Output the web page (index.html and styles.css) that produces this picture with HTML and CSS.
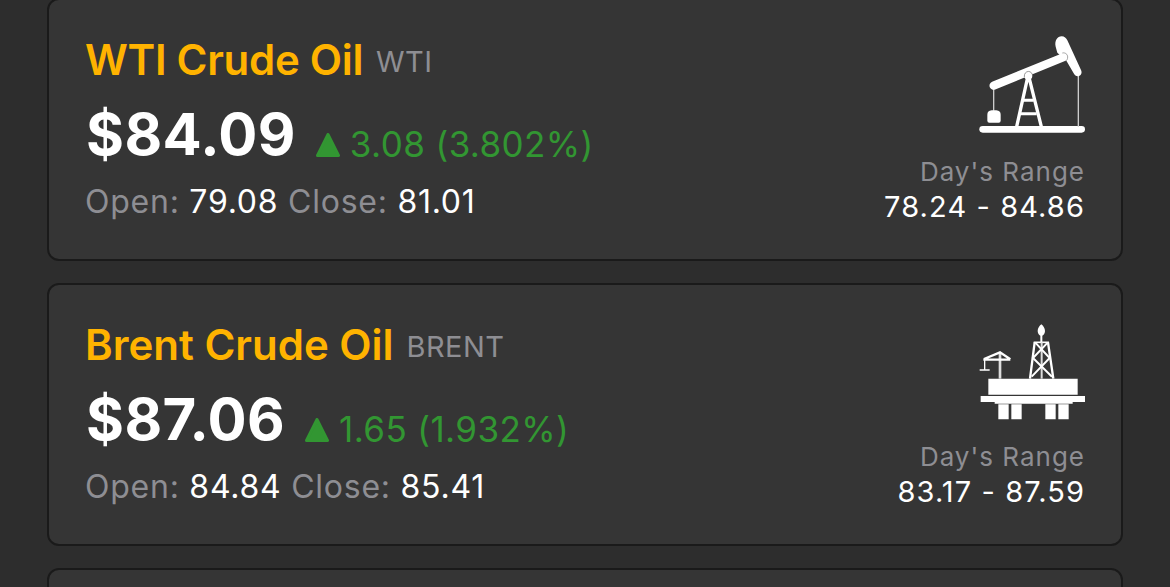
FILE: index.html
```html
<!DOCTYPE html>
<html lang="en">
<head>
    <meta charset="UTF-8">
    <meta name="viewport" content="width=device-width, initial-scale=1.0">
    <title>Oil Prices</title>
    <link rel="stylesheet" href="styles.css">
</head>

<body>
    <main class="card-list">
        <article class="card">
            <div class="quote">
                <div class="title-row">
                    <h2 class="name name-wti">WTI Crude Oil</h2>
                    <span class="ticker">WTI</span>
                </div>
                <div class="price-row">
                    <span class="price">$84.09</span>
                    <span class="change">
                        <svg class="arrow" viewBox="0 0 24 24"><path d="M12 1.5 L22.5 22.5 H1.5 Z"/></svg>
                        <span>3.08 (3.802%)</span>
                    </span>
                </div>
                <p class="session">Open: <b>79.08</b> Close: <b>81.01</b></p>
            </div>

            <div class="range">
                <svg class="icon" viewBox="57 45 318 300">
                    <g stroke="#fff" fill="none">
                        <path d="M68 328 H365" stroke-width="20" stroke-linecap="round"/>
                        <path d="M101 205 V272 M355 160 V320" stroke-width="4" stroke="#ccc"/>
                        <path d="M203 172 L170 320 M207 172 L244 320" stroke-width="10"/>
                        <path d="M191 241 H221 M182 281 H230" stroke-width="9"/>
                        <path d="M101 197 L312 111" stroke-width="25" stroke-linecap="round"/>
                    </g>
                    <path d="M287 80 C283 62 292 49 305 49 C313 49 319 54 322 61 L363 150 C368 160 361 169 353 169 C348 169 344 166 341 160 L320 124 L292 98 Z" fill="#fff"/>
                    <path d="M307 99 C316 97 323 103 323 111 C323 117 321 121 317 123" stroke="#777" stroke-width="2" fill="none"/>
                    <circle cx="205" cy="167" r="12" fill="#fff"/>
                    <path d="M193 171 C191 150 218 148 218 170" stroke="#666" stroke-width="2" fill="none"/>
                    <path d="M82 302 V284 Q82 272 95 271 H109 Q122 272 122 284 V302 Q122 308 116 308 H88 Q82 308 82 302 Z" fill="#fff"/>
                </svg>
                <p class="range-label">Day's Range</p>
                <p class="range-value">78.24 - 84.86</p>
            </div>
        </article>

        <article class="card">
            <div class="quote">
                <div class="title-row">
                    <h2 class="name">Brent Crude Oil</h2>
                    <span class="ticker">BRENT</span>
                </div>
                <div class="price-row">
                    <span class="price">$87.06</span>
                    <span class="change">
                        <svg class="arrow" viewBox="0 0 24 24"><path d="M12 1.5 L22.5 22.5 H1.5 Z"/></svg>
                        <span>1.65 (1.932%)</span>
                    </span>
                </div>
                <p class="session">Open: <b>84.84</b> Close: <b>85.41</b></p>
            </div>

            <div class="range">
                <svg class="icon" viewBox="57 30 318 300">
                    <g fill="#fff">
                        <path d="M85 206 H353 V254 H85 Z"/>
                        <path d="M62 258 H375 V276 H338 V281 H104 V276 H62 Z"/>
                        <path d="M115 283 H146 V328 H115 Z M154 283 H185 V328 H154 Z M256 283 H287 V328 H256 Z M295 283 H326 V328 H295 Z"/>
                        <path d="M244 43 C250 48 255 55 255 63 C255 70 251 75 247 77 V96 H241 V77 C237 75 233 70 233 63 C233 55 238 48 244 43 Z"/>
                    </g>
                    <g stroke="#fff" fill="none">
                        <path d="M221 97 H267" stroke-width="5"/>
                        <path d="M224 97 L210 206 M264 97 L280 206" stroke-width="7"/>
                        <path d="M245 97 V206" stroke-width="6" stroke="#ddd"/>
                        <path d="M226 98 L269 144 L215 200 M263 98 L219 144 L276 200" stroke-width="6"/>
                        <path d="M120 127 V206" stroke-width="8" stroke="#ddd"/>
                        <path d="M70 149 H151 M72 147 L120 127 L151 148" stroke-width="7"/>
                        <path d="M74 148 V180 M59 180 H89" stroke-width="4"/>
                    </g>
                </svg>
                <p class="range-label">Day's Range</p>
                <p class="range-value">83.17 - 87.59</p>
            </div>
        </article>

        <article class="card"></article>
    </main>
</body>
</html>
```
FILE: styles.css
```css
* {
    box-sizing: border-box;
}

body {
    margin: 0;
    height: 587px;
    overflow: hidden;
    background-color: #2d2d2d;
    font-family: Inter, "Liberation Sans", sans-serif;
    color: #fff;
}

h2,
p {
    margin: 0;
}

.card-list {
    display: flex;
    flex-direction: column;
    gap: 22px;
    height: 589px;
    margin: -2px 47px 0;
    overflow: hidden;
}

.card {
    display: flex;
    justify-content: space-between;
    flex-shrink: 0;
    height: 263px;
    padding: 35px 36px 0;
    background-color: #353535;
    border: 2px solid #1a1a1a;
    border-radius: 12px;
}

.title-row {
    display: flex;
    align-items: flex-start;
    gap: 13px;
    height: 50px;
}

.name {
    font-size: 42px;
    font-weight: 600;
    line-height: 50px;
    color: #ffb300;
}

.name-wti {
    letter-spacing: -0.3px;
}

.ticker {
    font-size: 29px;
    line-height: 53px;
    letter-spacing: 0.4px;
    color: #8e8e93;
}

.price-row {
    display: flex;
    align-items: flex-start;
    gap: 20px;
    height: 70px;
    margin: 14px 0 0 1px;
}

.price {
    font-size: 58px;
    font-weight: 700;
    line-height: 70px;
    letter-spacing: 0.4px;
}

.change {
    display: flex;
    align-items: baseline;
    gap: 10px;
    padding-top: 20px;
    font-size: 35px;
    line-height: 50px;
    letter-spacing: 0.4px;
    color: #329632;
}

.arrow {
    width: 24px;
    height: 24px;
    margin-bottom: 1px;
    fill: #329632;
    stroke: #329632;
    stroke-width: 3;
    stroke-linejoin: round;
}

.session {
    margin-top: 12px;
    font-size: 32px;
    line-height: 42px;
    letter-spacing: 0.75px;
    color: #8e8e93;
}

.session b {
    font-weight: 400;
    color: #fff;
}

.range {
    display: flex;
    flex-direction: column;
    align-items: flex-end;
}

.icon {
    width: 106px;
    height: 100px;
}

.range-label {
    margin-top: 21px;
    font-size: 26px;
    line-height: 32px;
    letter-spacing: 1px;
    color: #8e8e93;
}

.range-value {
    font-size: 29px;
    line-height: 38px;
    letter-spacing: 1.1px;
}
```
